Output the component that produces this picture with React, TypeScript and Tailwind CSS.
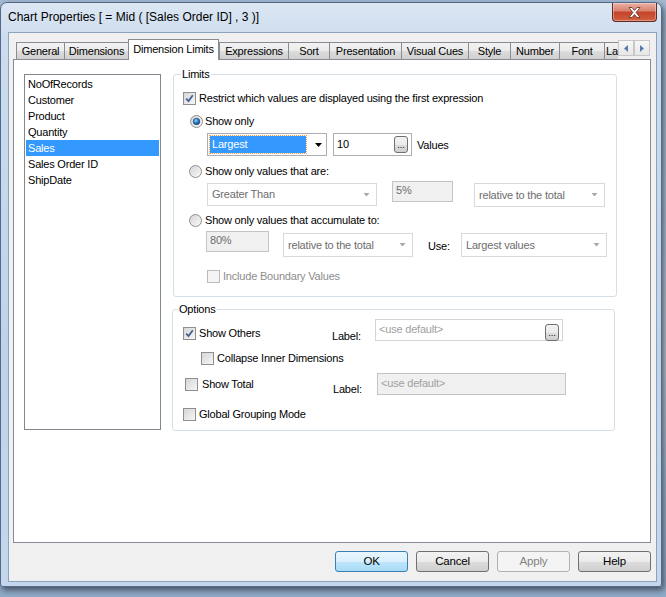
const tabs = [
  { label: "General", w: "w-[48px]" },
  { label: "Dimensions", w: "w-[64px]" },
  { label: "Dimension Limits", w: "w-[91px]", active: true },
  { label: "Expressions", w: "w-[69px]" },
  { label: "Sort", w: "w-[41px]" },
  { label: "Presentation", w: "w-[72px]" },
  { label: "Visual Cues", w: "w-[67px]" },
  { label: "Style", w: "w-[42px]" },
  { label: "Number", w: "w-[49px]" },
  { label: "Font", w: "w-[45px]" },
];

const fields = ["NoOfRecords", "Customer", "Product", "Quantity", "Sales", "Sales Order ID", "ShipDate"];

function CheckBox({ checked = false, disabled = false }: { checked?: boolean; disabled?: boolean }) {
  return (
    <span
      className={`flex h-[13px] w-[13px] shrink-0 items-center justify-center border ${
        disabled
          ? "border-[#bcbcbc] bg-[#f4f4f4]"
          : "border-[#8e8f8f] bg-[linear-gradient(135deg,#d6d6d6,#f6f6f6)]"
      }`}
    >
      {checked && (
        <svg width="9" height="9" viewBox="0 0 9 9">
          <path d="M1.2 4.6 L3.5 7 L7.8 1.2" fill="none" stroke="#4a5e98" strokeWidth="1.8" />
        </svg>
      )}
    </span>
  );
}

function Radio({ checked = false }: { checked?: boolean }) {
  return (
    <svg width="13" height="13" viewBox="0 0 13 13" className="shrink-0">
      <defs>
        <linearGradient id="rb" x1="0" y1="0" x2="1" y2="1">
          <stop offset="0" stopColor="#d4d4d4" />
          <stop offset="1" stopColor="#fbfbfb" />
        </linearGradient>
        <radialGradient id="rd" cx="0.4" cy="0.35" r="0.7">
          <stop offset="0" stopColor="#8fd1f5" />
          <stop offset="0.5" stopColor="#2c82c9" />
          <stop offset="1" stopColor="#10356b" />
        </radialGradient>
      </defs>
      <circle cx="6.5" cy="6.5" r="6" fill="url(#rb)" stroke="#8e8f8f" />
      {checked && <circle cx="6.5" cy="6.5" r="3.3" fill="url(#rd)" stroke="#1e3f6e" strokeWidth="0.6" />}
    </svg>
  );
}

function Arrow({ disabled = false }: { disabled?: boolean }) {
  return disabled ? (
    <svg width="7" height="4" viewBox="0 0 7 4" className="ml-auto mr-[6px] shrink-0">
      <path d="M0.5 0 H6.5 L3.5 3.5 Z" fill="#a9a9a9" />
    </svg>
  ) : (
    <svg width="7" height="4" viewBox="0 0 7 4" className="ml-auto mr-[4px] shrink-0">
      <path d="M0 0 H7 L3.5 4 Z" fill="#000" />
    </svg>
  );
}

function Dots() {
  return (
    <span className="ml-auto mr-[3px] flex h-[17px] w-[14px] shrink-0 items-end justify-center rounded-[3px] border border-[#707070] bg-[linear-gradient(#f2f2f2,#ebebeb_50%,#dddddd_51%,#cfcfcf)] pb-[2px] text-[9px] leading-[9px] tracking-normal text-black">
      ...
    </span>
  );
}

function WinButton({ label, variant = "normal" }: { label: string; variant?: "normal" | "default" | "disabled" }) {
  const cls =
    variant === "default"
      ? "border-[#3c7fb1] bg-[linear-gradient(#eaf6fd,#d9f0fc_50%,#bee6fd_51%,#a7d9f5)] text-black"
      : variant === "disabled"
        ? "border-[#adb2b5] bg-[#f4f4f4] text-[#838383]"
        : "border-[#707070] bg-[linear-gradient(#f2f2f2,#ebebeb_50%,#dddddd_51%,#cfcfcf)] text-black";
  return (
    <div className={`flex h-[21px] w-[73px] items-center justify-center rounded-[3px] border text-[11.5px] ${cls}`}>
      {label}
    </div>
  );
}

export default function App() {
  return (
    <div className="h-[597px] w-[666px] overflow-hidden bg-[linear-gradient(180deg,#a4b9d2,#b8c8da_60%,#8fa9c8)] pt-[2px] font-['Liberation_Sans',Arial,sans-serif] text-[11px] leading-[13px] tracking-[-0.2px] text-black">
      <div className="flex h-[585px] w-[662px] flex-col rounded-t-[7px] rounded-b-[3px] border border-[#54698a] bg-[linear-gradient(180deg,#dce7f3,#cddcee_6%,#bed3ea_60%,#c4d7ec)] shadow-[2px_3px_6px_rgba(0,0,0,0.55)]">
        {/* title bar */}
        <div className="flex h-[29px] shrink-0 items-start pl-[7px]">
          <div className="mt-[7px] text-[12px] leading-[15px] tracking-normal">Chart Properties [ = Mid ( [Sales Order ID] , 3 )]</div>
          <div className="ml-auto mr-[4px] flex h-[19px] w-[45px] items-center justify-center rounded-b-[4px] border border-t-0 border-[#5e2b24] bg-[linear-gradient(180deg,#eab1a4,#d8806b_45%,#c4432a_50%,#d25f3f)] shadow-[inset_0_0_0_1px_rgba(255,255,255,0.35)]">
            <svg width="13" height="11" viewBox="0 0 13 11">
              <path
                d="M1 0.5 H4 L6.5 3.4 L9 0.5 H12 L8.1 5.5 L12 10.5 H9 L6.5 7.6 L4 10.5 H1 L4.9 5.5 Z"
                fill="#fff"
                stroke="#5a2a22"
                strokeWidth="0.8"
              />
            </svg>
          </div>
        </div>

        {/* client area */}
        <div className="ml-[7px] flex h-[550px] w-[649px] flex-col border border-[#8da2bd] bg-[#f0f0f0]">
          {/* tab strip */}
          <div className="ml-[7px] mt-[6px] flex h-[20px] items-end">
            {tabs.map((t) =>
              t.active ? (
                <div
                  key={t.label}
                  className={`relative z-10 -mb-px flex h-[21px] ${t.w} items-start justify-center border border-b-0 border-[#898c95] bg-white pt-[3px]`}
                >
                  {t.label}
                </div>
              ) : (
                <div
                  key={t.label}
                  className={`flex h-[17px] ${t.w} items-center justify-center border-l border-t border-[#898c95] bg-[linear-gradient(#f2f2f2,#ebebeb_50%,#dddddd_51%,#cfcfcf)] pt-[1px]`}
                >
                  {t.label}
                </div>
              ),
            )}
            <div className="flex h-[17px] w-[14px] items-center overflow-hidden border-l border-t border-[#898c95] bg-[linear-gradient(#f2f2f2,#ebebeb_50%,#dddddd_51%,#cfcfcf)] pl-[1px] pt-[1px]">
              La
            </div>
            <div className="mb-[3px] flex h-[16px] w-[32px] self-end">
              {["M4 0 V7 L0 3.5 Z", "M0 0 V7 L4 3.5 Z"].map((d) => (
                <span
                  key={d}
                  className="flex h-[16px] w-[16px] items-center justify-center border border-[#c8c8c8] bg-[linear-gradient(#f8f8f8,#e6e6e6)]"
                >
                  <svg width="4" height="7" viewBox="0 0 4 7">
                    <path d={d} fill="#5a7bb0" />
                  </svg>
                </span>
              ))}
            </div>
          </div>

          {/* tab page */}
          <div className="ml-[4px] flex h-[484px] w-[638px] border border-[#898c95] bg-white">
            {/* list box */}
            <div className="ml-[10px] mt-[14px] h-[356px] w-[137px] border border-[#828790] pt-px">
              {fields.map((f) => (
                <div
                  key={f}
                  className={`mx-px flex h-[16px] items-center pl-[2px] ${
                    f === "Sales" ? "bg-[#3399ff] text-white" : ""
                  }`}
                >
                  {f}
                </div>
              ))}
            </div>

            {/* right column */}
            <div className="ml-[12px] mt-[14px] flex flex-col">
              {/* Limits */}
              <div className="relative h-[223px] w-[444px] rounded-[3px] border border-[#d5dfe5]">
                <span className="absolute -top-[7px] left-[7px] bg-white px-px">Limits</span>

                <div className="ml-[9px] mt-[17px] flex h-[13px] items-center gap-[3px]">
                  <CheckBox checked />
                  <span>Restrict which values are displayed using the first expression</span>
                </div>

                <div className="ml-[16px] mt-[10px] flex h-[13px] items-center gap-[2px]">
                  <Radio checked />
                  <span>Show only</span>
                </div>

                <div className="ml-[33px] mt-[5px] flex h-[23px] items-center">
                  <div className="flex h-[23px] w-[120px] items-center border border-[#abadb3] bg-white">
                    <div className="ml-[2px] flex h-[17px] w-[96px] items-center bg-[#3399ff] pl-[2px] text-white outline outline-1 outline-dotted outline-[#ff9d42]">
                      Largest
                    </div>
                    <Arrow />
                  </div>
                  <div className="ml-[6px] flex h-[23px] w-[79px] items-center border border-[#abadb3] bg-white pl-[3px]">
                    <span>10</span>
                    <Dots />
                  </div>
                  <span className="ml-[5px] pt-[2px]">Values</span>
                </div>

                <div className="ml-[15px] mt-[9px] flex h-[13px] items-center gap-[3px]">
                  <Radio />
                  <span>Show only values that are:</span>
                </div>

                <div className="ml-[33px] mt-[3px] flex h-[26px] items-start">
                  <div className="mt-[2px] flex h-[23px] w-[170px] items-center border border-[#d9d9d9] bg-white pl-[4px] text-[#6d6d6d]">
                    Greater Than
                    <Arrow disabled />
                  </div>
                  <div className="ml-[15px] h-[21px] w-[61px] border border-[#c4c4c4] bg-[#f0f0f0] pl-[3px] pt-[2px] text-[#6d6d6d]">
                    5%
                  </div>
                  <div className="ml-[21px] mt-[2px] flex h-[24px] w-[131px] items-center border border-[#d9d9d9] bg-white pl-[4px] text-[#6d6d6d]">
                    relative to the total
                    <Arrow disabled />
                  </div>
                </div>

                <div className="ml-[15px] mt-[7px] flex h-[13px] items-center gap-[3px]">
                  <Radio />
                  <span>Show only values that accumulate to:</span>
                </div>

                <div className="ml-[32px] mt-[4px] flex h-[26px] items-start">
                  <div className="h-[21px] w-[63px] border border-[#c4c4c4] bg-[#f0f0f0] pl-[3px] pt-[2px] text-[#6d6d6d]">
                    80%
                  </div>
                  <div className="ml-[14px] mt-[2px] flex h-[24px] w-[130px] items-center border border-[#d9d9d9] bg-white pl-[4px] text-[#6d6d6d]">
                    relative to the total
                    <Arrow disabled />
                  </div>
                  <span className="ml-[15px] mt-[9px] w-[33px]">Use:</span>
                  <div className="mt-[2px] flex h-[24px] w-[146px] items-center border border-[#d9d9d9] bg-white pl-[4px] text-[#6d6d6d]">
                    Largest values
                    <Arrow disabled />
                  </div>
                </div>

                <div className="ml-[33px] mt-[13px] flex h-[13px] items-center gap-[3px] text-[#8d8d8d]">
                  <CheckBox disabled />
                  <span>Include Boundary Values</span>
                </div>
              </div>

              {/* Options */}
              <div className="relative -ml-px mt-[12px] h-[122px] w-[443px] rounded-[3px] border border-[#d5dfe5]">
                <span className="absolute -top-[7px] left-[5px] bg-white px-px">Options</span>

                <div className="mt-[9px] flex h-[22px] items-start">
                  <div className="ml-[10px] mt-[8px] flex w-[149px] items-center gap-[3px]">
                    <CheckBox checked />
                    <span>Show Others</span>
                  </div>
                  <span className="mt-[11px] w-[43px]">Label:</span>
                  <div className="flex h-[22px] w-[188px] items-start border border-[#d5d5d5] bg-white pl-[3px] pt-[3px] text-[#a0a0a0]">
                    <span>&lt;use default&gt;</span>
                    <span className="ml-auto mt-px">
                      <Dots />
                    </span>
                  </div>
                </div>

                <div className="ml-[28px] mt-[11px] flex h-[13px] items-center gap-[3px]">
                  <CheckBox />
                  <span>Collapse Inner Dimensions</span>
                </div>

                <div className="mt-[8px] flex h-[22px] items-start">
                  <div className="ml-[12px] mt-[5px] flex w-[148px] items-center gap-[4px]">
                    <CheckBox />
                    <span>Show Total</span>
                  </div>
                  <span className="mt-[10px] w-[44px]">Label:</span>
                  <div className="h-[22px] w-[189px] border border-[#c4c4c4] bg-[#f0f0f0] pl-[3px] pt-[3px] text-[#a0a0a0]">
                    &lt;use default&gt;
                  </div>
                </div>

                <div className="ml-[10px] mt-[13px] flex h-[13px] items-center gap-[3px]">
                  <CheckBox />
                  <span>Global Grouping Mode</span>
                </div>
              </div>
            </div>
          </div>

          {/* buttons */}
          <div className="mr-[5px] mt-[8px] flex justify-end gap-[8px]">
            <WinButton label="OK" variant="default" />
            <WinButton label="Cancel" />
            <WinButton label="Apply" variant="disabled" />
            <WinButton label="Help" />
          </div>
        </div>
      </div>
    </div>
  );
}
